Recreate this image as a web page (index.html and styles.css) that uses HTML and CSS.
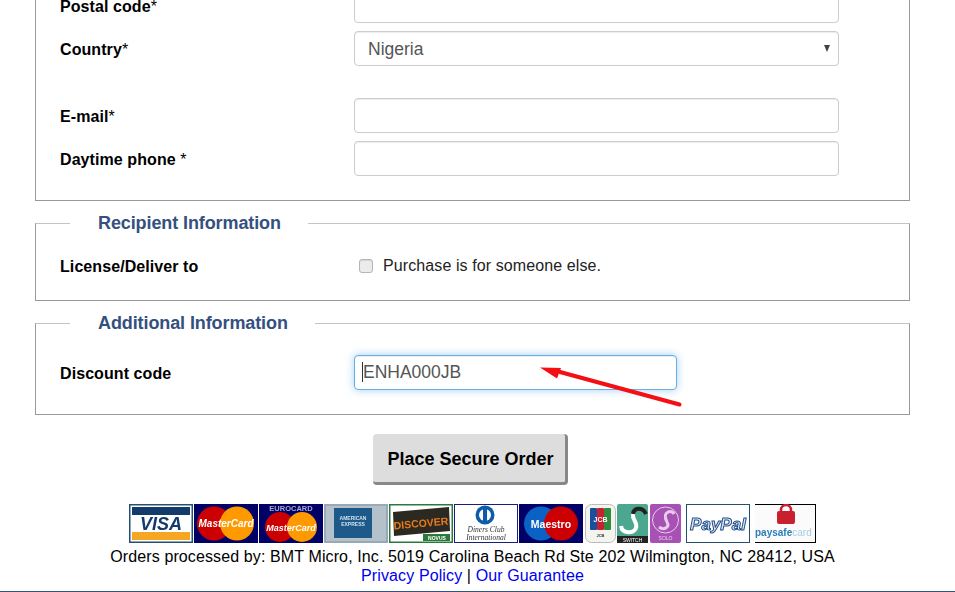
FILE: index.html
```html
<!DOCTYPE html>
<html lang="en">
<head>
<meta charset="utf-8">
<title>Secure Order</title>
<link rel="stylesheet" href="styles.css">
</head>
<body>
<main class="page">
  <fieldset class="box box-first">
    <div class="row"><label class="label">Postal code<span class="req">*</span></label><input class="field" type="text"></div>
    <div class="row"><label class="label">Country<span class="req">*</span></label>
      <div class="select-wrap"><select class="field select"><option>Nigeria</option></select><span class="select-arrow"></span></div>
    </div>
    <div class="row row-spaced"><label class="label">E-mail<span class="req">*</span></label><input class="field" type="text"></div>
    <div class="row"><label class="label">Daytime phone <span class="req">*</span></label><input class="field" type="text"></div>
  </fieldset>

  <fieldset class="box box-recipient">
    <legend class="legend">Recipient Information</legend>
    <div class="row"><label class="label">License/Deliver to</label>
      <div class="check-line"><input class="check" type="checkbox"><span>Purchase is for someone else.</span></div>
    </div>
  </fieldset>

  <fieldset class="box box-additional">
    <legend class="legend">Additional Information</legend>
    <div class="row"><label class="label">Discount code</label>
      <div class="discount-wrap"><input class="field field-focus" type="text" value="ENHA000JB"><span class="caret"></span></div>
    </div>
  </fieldset>

  <div class="actions"><button class="order-btn" type="button">Place Secure Order</button></div>

  <div class="cards">
    <svg class="card" width="64" height="39" viewBox="0 0 64 39"><rect width="64" height="39" fill="#24506f"/><rect x="1.500" y="1.500" width="61" height="36" fill="#fff"/><rect x="3" y="3" width="58" height="8" fill="#123a6b"/><rect x="3" y="28" width="58" height="8" fill="#f5a623"/><text x="32" y="26" class="t-visa">VISA</text></svg>
    <svg class="card" width="64" height="39" viewBox="0 0 64 39"><rect width="64" height="39" fill="#000066"/><circle cx="20" cy="19.500" r="17" fill="#cc0000"/><circle cx="43" cy="19.500" r="17" fill="#ff9900"/><text x="32" y="23" class="t-mc">MasterCard</text></svg>
    <svg class="card" width="64" height="39" viewBox="0 0 64 39"><rect width="64" height="39" fill="#000066"/><text x="32" y="7" class="t-euro">EUROCARD</text><circle cx="21" cy="23" r="15" fill="#cc0000"/><circle cx="43" cy="23" r="15" fill="#ff9900"/><text x="32" y="27" class="t-mc t-mc-small">MasterCard</text></svg>
    <svg class="card" width="64" height="39" viewBox="0 0 64 39"><rect width="64" height="39" fill="#b4c0ca"/><rect x="1" y="1" width="62" height="37" fill="none" stroke="#7d92a3"/><rect x="10" y="4" width="38" height="30" fill="#1d5a8a"/><text x="29" y="16" class="t-amex">AMERICAN</text><text x="29" y="22" class="t-amex">EXPRESS</text></svg>
    <svg class="card" width="64" height="39" viewBox="0 0 64 39"><rect width="64" height="39" fill="#2b7a3b"/><rect x="1.500" y="1.500" width="61" height="36" fill="#fff"/><polygon points="4,8 60,3 61,27 5,32" fill="#2c2a20"/><text x="32" y="23" class="t-disc" transform="rotate(-5 32 20)">DISCOVER</text><rect x="34" y="30" width="27" height="7" fill="#2b7a3b"/><text x="48" y="36" class="t-novus">NOVUS</text></svg>
    <svg class="card" width="64" height="39" viewBox="0 0 64 39"><rect width="64" height="39" fill="#1c1c80"/><rect x="1" y="1" width="62" height="37" fill="#fff"/><circle cx="31" cy="11" r="9.500" fill="#0b5cab"/><circle cx="31" cy="11" r="6" fill="#fff"/><rect x="29" y="5" width="4" height="12" fill="#0b5cab"/><text x="32" y="28" class="t-din">Diners Club</text><text x="32" y="36" class="t-din">International</text></svg>
    <svg class="card" width="64" height="39" viewBox="0 0 64 39"><rect width="64" height="39" fill="#000066"/><circle cx="22" cy="19.500" r="17" fill="#0a62c4"/><circle cx="42" cy="19.500" r="17" fill="#cc0000"/><text x="32" y="24" class="t-mae">Maestro</text></svg>
    <svg class="card card-gap-l" width="31" height="39" viewBox="0 0 31 39"><rect x=".5" y=".5" width="30" height="38" rx="6" fill="#f4f4ee" stroke="#bbb"/><rect x="5" y="4" width="7" height="22" rx="1" fill="#1b4f9c"/><rect x="12" y="4" width="7" height="22" rx="1" fill="#c8202f"/><rect x="19" y="4" width="7" height="22" rx="1" fill="#2e8b3f"/><text x="15.500" y="18" class="t-jcb">JCB</text><text x="15.500" y="33" class="t-tiny">JCB</text></svg>
    <svg class="card card-after-jcb" width="31" height="39" viewBox="0 0 31 39"><rect width="31" height="39" rx="2" fill="#4ba78f"/><rect y="32" width="31" height="7" fill="#222"/><path d="M16 10C17 3 26 3 29 10" fill="none" stroke="#222" stroke-width="4"/><path d="M4 22C5 30 17 30 19 24C21 18 15 16 16 10" fill="none" stroke="#fff" stroke-width="4"/><text x="15.500" y="38" class="t-sw">SWITCH</text></svg>
    <svg class="card card-solo" width="31" height="39" viewBox="0 0 31 39"><rect width="31" height="39" rx="2" fill="#a851b4"/><circle cx="15.500" cy="16" r="13" fill="none" stroke="#e7cdec"/><path d="M9 23C14 27 20 23 17 18C15 14 14 10 18 8C21 7 23 8 24 10" fill="none" stroke="#e7cdec" stroke-width="3"/><text x="15.500" y="36" class="t-solo">SOLO</text></svg>
    <svg class="card card-paypal" width="64" height="39" viewBox="0 0 64 39"><rect x=".5" y=".5" width="63" height="38" fill="#fff" stroke="#24506f"/><text x="32" y="26" class="t-pp">PayPal</text></svg>
    <svg class="card card-paysafe" width="61" height="39" viewBox="0 0 61 39"><rect width="61" height="39" fill="#000"/><rect y="1" width="60" height="37" fill="#fbfbfb"/><path d="M26 8V6a5 5 0 0 1 10 0V8" fill="none" stroke="#c8202f" stroke-width="2.500"/><rect x="22" y="7" width="18" height="13" rx="2" fill="#c8202f"/><text x="0" y="32" class="t-ps">paysafe<tspan class="t-ps-light">card</tspan></text></svg>
  </div>

  <footer class="footer">
    <div>Orders processed by: BMT Micro, Inc. 5019 Carolina Beach Rd Ste 202 Wilmington, NC 28412, USA</div>
    <div><a class="link" href="#">Privacy Policy</a> | <a class="link" href="#">Our Guarantee</a></div>
  </footer>
</main>

<svg class="arrow" width="160" height="60" viewBox="0 0 160 60">
  <line x1="139.500" y1="44.500" x2="20" y2="12" stroke="#f40f14" stroke-width="4" stroke-linecap="round"/>
  <polygon points="0,7.500 21,8 17,18.500" fill="#f40f14"/>
</svg>
</body>
</html>
```
FILE: styles.css
```css
* { box-sizing: border-box; }
html, body { margin: 0; padding: 0; height: 592px; overflow: hidden; background: #fff; }
body { position: relative; font-family: "Liberation Sans", Arial, sans-serif; font-size: 16px; color: #000; }

.page { width: 875px; margin: -12px 0 0 35px; }

.box {
  margin: 0 0 12px;
  min-width: 0;
  border: 1px solid #999;
  border-top-color: #c4c4c4;
  padding: 0 0 0 24px;
}
.box-first { border-top: 0; padding-bottom: 24px; }
.box-recipient { padding-top: 15px; padding-bottom: 17px; }
.box-additional { padding-top: 22px; padding-bottom: 24px; margin-bottom: 19px; }

.legend {
  margin-left: 10px;
  padding: 0 27px 0 28px;
  font-size: 18px;
  line-height: 20px;
  font-weight: bold;
  letter-spacing: -.1px;
  color: #34507f;
}

.row { display: flex; align-items: center; min-height: 35px; margin-bottom: 8px; }
.box .row:last-child { margin-bottom: 0; }
.row-spaced { margin-top: 32px; }

.label { width: 294px; flex: none; font-weight: bold; font-size: 16px; letter-spacing: .08px; padding-top: 3px; color: #000; }
.req { font-weight: normal; }

.field {
  display: block;
  width: 485px;
  height: 35px;
  padding: 0 13px;
  border: 1px solid #ccc;
  border-radius: 4px;
  background: #fff;
  box-shadow: inset 0 1px 1px rgba(0, 0, 0, .075);
  font-family: "Liberation Sans", Arial, sans-serif;
  font-size: 17.5px;
  color: #555;
  outline: 0;
}

.select-wrap { position: relative; width: 485px; }
.select { appearance: none; -webkit-appearance: none; }
.select-arrow {
  position: absolute;
  right: 9px;
  top: 14px;
  border-left: 3.5px solid transparent;
  border-right: 3.5px solid transparent;
  border-top: 7px solid #444;
}

.check-line { display: flex; align-items: center; color: #222; letter-spacing: .1px; padding-top: 1px; }
.check {
  appearance: none;
  -webkit-appearance: none;
  width: 14px;
  height: 14px;
  margin: 0 10px 0 5px;
  border: 1px solid #b5b5b5;
  border-radius: 3px;
  background: #ececec;
  box-shadow: inset 0 1px 1px rgba(0, 0, 0, .1);
}

.discount-wrap { position: relative; width: 323px; }
.field-focus {
  width: 323px;
  padding-left: 8px;
  border-color: #66afe9;
  box-shadow: inset 0 1px 1px rgba(0, 0, 0, .075), 0 0 8px rgba(102, 175, 233, .6);
}
.caret { position: absolute; left: 8px; top: 7px; width: 1px; height: 20px; background: #333; }

.actions { display: flex; justify-content: center; padding-right: 4px; margin-bottom: 19px; }
.order-btn {
  width: 195px;
  height: 51px;
  padding: 2px 0 0 3px;
  border: 0;
  border-right: 3px solid #888;
  border-bottom: 3px solid #888;
  border-radius: 4px;
  background: #ddd;
  font-family: "Liberation Sans", Arial, sans-serif;
  font-size: 18px;
  font-weight: bold;
  color: #000;
}

.cards { display: flex; margin-left: 94px; height: 39px; margin-bottom: 4px; }
.card { display: block; flex: none; margin-right: 1px; filter: blur(.35px); }
.card-gap-l { margin-left: 1px; }
.card-solo { margin-left: 1px; margin-right: 5px; }
.card-paypal { margin-right: 5px; }

.card text { font-family: "Liberation Sans", Arial, sans-serif; text-anchor: middle; }
.t-visa { font-size: 18px; font-weight: bold; font-style: italic; fill: #123a6b; }
.t-mc { font-size: 10px; font-weight: bold; font-style: italic; fill: #fff; }
.t-mc-small { font-size: 9px; }
.t-euro { font-size: 7.500px; font-weight: bold; fill: #a9a9c9; }
.t-amex { font-size: 5px; font-weight: bold; fill: #cfe0ec; }
.t-disc { font-size: 10.500px; font-weight: bold; fill: #e87a1d; }
.t-novus { font-size: 5px; font-weight: bold; fill: #fff; }
.card .t-din { font-family: "Liberation Serif", serif; font-size: 7.500px; font-style: italic; fill: #333; }
.t-mae { font-size: 10.500px; font-weight: bold; fill: #fff; }
.t-jcb { font-size: 7px; font-weight: bold; fill: #fff; }
.t-tiny { font-size: 4px; font-weight: bold; fill: #333; }
.t-sw { font-size: 5px; fill: #fff; }
.t-solo { font-size: 5px; fill: #e7cdec; }
.t-pp { font-size: 17px; font-weight: bold; font-style: italic; fill: #dfe8f5; stroke: #1f4b88; stroke-width: 1px; }
.card .t-ps { font-size: 10px; font-weight: bold; fill: #2a7fb8; text-anchor: start; }
.t-ps-light { font-weight: normal; fill: #a8cbe0; }

.footer { width: 875px; height: 44px; text-align: center; line-height: 19px; letter-spacing: .115px; }
.link { color: #0000ee; text-decoration: none; }

.arrow { position: absolute; left: 540px; top: 360px; overflow: visible; }
html::after { content: ""; position: fixed; left: 0; right: 0; top: 591px; height: 1px; background: #34507f; }
```
